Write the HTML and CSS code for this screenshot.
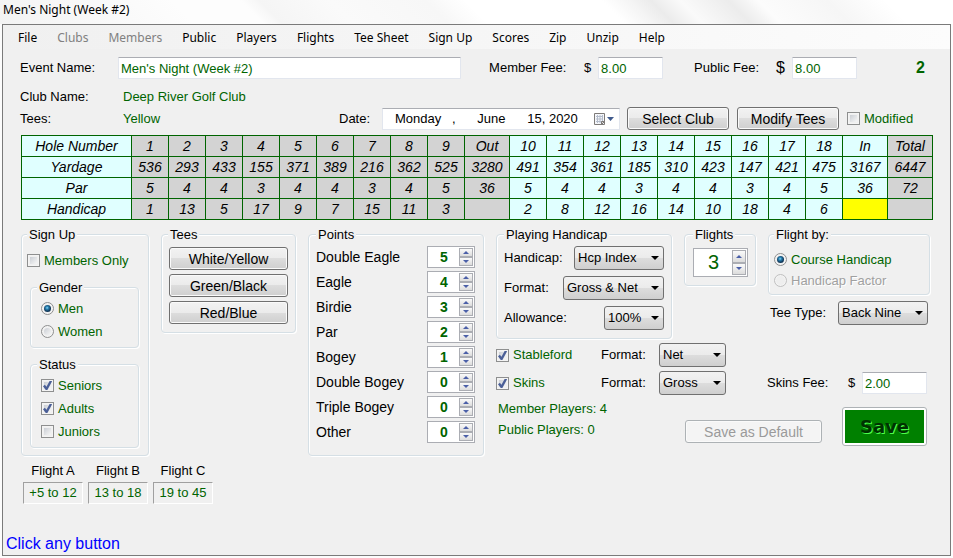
FILE: index.html
```html
<!DOCTYPE html>
<html lang="en">
  <head>
    <meta charset="UTF-8" />
    <meta name="viewport" content="width=device-width, initial-scale=1" />
    <title>Men's Night (Week #2)</title>
    <link rel="stylesheet" href="styles.css">
  </head>
  <body>
    <header class="titlebar">Men's Night (Week #2)</header>
    <main class="window">
      <nav class="menu">
        <button>File</button>
        <button disabled>Clubs</button>
        <button disabled>Members</button>
        <button>Public</button>
        <button>Players</button>
        <button>Flights</button>
        <button>Tee Sheet</button>
        <button>Sign Up</button>
        <button>Scores</button>
        <button>Zip</button>
        <button>Unzip</button>
        <button>Help</button>
      </nav>

      <form class="content" onsubmit="return false">
        <div class="row">
          <label class="name" for="event">Event Name:</label>
          <input class="text grow" id="event" type="text" value="Men's Night (Week #2)">
          <label class="fee-label" for="memberFee">Member Fee:</label>
          <span class="dollar">$</span>
          <input class="text fee" id="memberFee" type="text" value="8.00">
          <label class="fee-label public" for="publicFee">Public Fee:</label>
          <span class="dollar big">$</span>
          <input class="text fee" id="publicFee" type="text" value="8.00">
          <b class="week">2</b>
        </div>
        <div class="row club">
          <span class="name">Club Name:</span>
          <span class="value">Deep River Golf Club</span>
        </div>
        <div class="row tees-row">
          <span class="name">Tees:</span>
          <span class="value grow">Yellow</span>
          <label class="date-label" for="date">Date:</label>
          <span class="date">
            <input id="date" type="text" value="Monday   ,      June      15, 2020">
            <button type="button" aria-label="Open calendar">
              <svg width="22" height="14" viewBox="0 0 22 14">
                <path d="M1.500 1.500h10v11h-10z" fill="#f4f6fa" stroke="#7d7a78"/>
                <path d="M3 4.500h7M3 7h7M3 9.500h7M4.500 3v8M7 3v8M9.500 3v8" stroke="#b4bccb" fill="none"/>
                <path d="M11.500 9.500h-3v3z" fill="#ddd" stroke="#7d7a78"/>
                <path d="M14 5h7l-3.500 4z" fill="#3f5a8c"/>
              </svg>
            </button>
          </span>
          <button class="btn club-btn" type="button">Select Club</button>
          <button class="btn club-btn" type="button">Modify Tees</button>
          <label class="check modified"><input type="checkbox">Modified</label>
        </div>

        <table class="card">
          <colgroup>
            <col class="head">
            <col span="9" class="hole">
            <col class="sum">
            <col span="9" class="hole">
            <col span="2" class="sum">
          </colgroup>
          <tbody id="card"></tbody>
        </table>

        <div class="groups">
          <fieldset class="signup">
            <legend>Sign Up</legend>
            <label class="check"><input type="checkbox">Members Only</label>
            <fieldset class="gender">
              <legend>Gender</legend>
              <label class="check"><input type="radio" name="gender" checked>Men</label>
              <label class="check"><input type="radio" name="gender">Women</label>
            </fieldset>
            <fieldset class="status">
              <legend>Status</legend>
              <label class="check"><input type="checkbox" checked>Seniors</label>
              <label class="check"><input type="checkbox" checked>Adults</label>
              <label class="check"><input type="checkbox">Juniors</label>
            </fieldset>
          </fieldset>

          <fieldset class="tees">
            <legend>Tees</legend>
            <button class="btn" type="button">White/Yellow</button>
            <button class="btn" type="button">Green/Black</button>
            <button class="btn" type="button">Red/Blue</button>
          </fieldset>

          <fieldset class="points">
            <legend>Points</legend>
            <div id="points"></div>
          </fieldset>

          <div class="right">
            <div class="right-top">
              <fieldset class="playing">
                <legend>Playing Handicap</legend>
                <div class="line">
                  <label for="hcp">Handicap:</label>
                  <select id="hcp" class="w90"><option>Hcp Index</option></select>
                </div>
                <div class="line">
                  <label for="format">Format:</label>
                  <select id="format" class="w101"><option>Gross &amp; Net</option></select>
                </div>
                <div class="line">
                  <label for="allowance">Allowance:</label>
                  <select id="allowance" class="w60"><option>100%</option></select>
                </div>
              </fieldset>

              <fieldset class="flights">
                <legend>Flights</legend>
                <span class="spin large">
                  <input type="text" value="3" aria-label="Flights">
                  <span class="arrows">
                    <button type="button" class="up" aria-label="Up"></button>
                    <button type="button" class="down" aria-label="Down"></button>
                  </span>
                </span>
              </fieldset>

              <div class="flight-col">
                <fieldset class="flight-by">
                  <legend>Flight by:</legend>
                  <label class="check"><input type="radio" name="by" checked>Course Handicap</label>
                  <label class="check off"><input type="radio" name="by" disabled>Handicap Factor</label>
                </fieldset>
                <div class="line tee-type">
                  <label for="teeType">Tee Type:</label>
                  <select id="teeType" class="w90"><option>Back Nine</option></select>
                </div>
              </div>
            </div>

            <div class="game">
              <label class="check"><input type="checkbox" checked>Stableford</label>
              <label for="stableford">Format:</label>
              <select id="stableford"><option>Net</option></select>
            </div>
            <div class="game">
              <label class="check"><input type="checkbox" checked>Skins</label>
              <label for="skins">Format:</label>
              <select id="skins"><option>Gross</option></select>
              <label class="skins-label" for="skinsFee">Skins Fee:</label>
              <span class="dollar">$</span>
              <input class="text fee" id="skinsFee" type="text" value="2.00">
            </div>

            <div class="bottom">
              <div class="players">
                <div>Member Players: 4</div>
                <div>Public Players: 0</div>
              </div>
              <button class="btn default" type="button" disabled>Save as Default</button>
              <button class="save" type="submit"><span>Save</span></button>
            </div>
          </div>
        </div>

        <div class="ranges">
          <label>Flight A<output>+5 to 12</output></label>
          <label>Flight B<output>13 to 18</output></label>
          <label>Flight C<output>19 to 45</output></label>
        </div>
      </form>

      <footer class="hint">Click any button</footer>
    </main>

    <script>
      const card = [
        ['Hole Number', 1, 2, 3, 4, 5, 6, 7, 8, 9, 'Out', 10, 11, 12, 13, 14, 15, 16, 17, 18, 'In', 'Total'],
        ['Yardage', 536, 293, 433, 155, 371, 389, 216, 362, 525, 3280, 491, 354, 361, 185, 310, 423, 147, 421, 475, 3167, 6447],
        ['Par', 5, 4, 4, 3, 4, 4, 3, 4, 5, 36, 5, 4, 4, 3, 4, 4, 3, 4, 5, 36, 72],
        ['Handicap', 1, 13, 5, 17, 9, 7, 15, 11, 3, '', 2, 8, 12, 16, 14, 10, 18, 4, 6, '', ''],
      ];
      const points = {
        'Double Eagle': 5,
        'Eagle': 4,
        'Birdie': 3,
        'Par': 2,
        'Bogey': 1,
        'Double Bogey': 0,
        'Triple Bogey': 0,
        'Other': 0,
      };

      // front nine and the total are grey, the back nine is light blue
      const cellClass = (row, i) => {
        if (row === 3 && i === 20) return 'mark';
        return (i > 0 && i < 11) || i === 21 ? 'grey' : '';
      };
      document.getElementById('card').innerHTML = card.map((cells, row) =>
        '<tr>' + cells.map((text, i) => {
          const tag = row === 0 || i === 0 ? 'th' : 'td';
          return `<${tag} class="${cellClass(row, i)}">${text}</${tag}>`;
        }).join('') + '</tr>'
      ).join('');

      document.getElementById('points').innerHTML = Object.entries(points).map(([name, value], i) => `
        <div class="line">
          <label for="p${i}">${name}</label>
          <span class="spin">
            <input id="p${i}" type="text" value="${value}">
            <span class="arrows">
              <button type="button" class="up" aria-label="Up"></button>
              <button type="button" class="down" aria-label="Down"></button>
            </span>
          </span>
        </div>`).join('');

      document.querySelectorAll('.spin').forEach(spin => {
        const input = spin.querySelector('input');
        spin.querySelector('.up').onclick = () => input.value = +input.value + 1;
        spin.querySelector('.down').onclick = () => input.value = Math.max(0, input.value - 1);
      });
    </script>
  </body>
</html>
```

FILE: styles.css
```css
* {
  box-sizing: border-box;
}

body {
  margin: 0;
  min-height: 100vh;
  display: flex;
  flex-direction: column;
  padding: 0 2px 2px;
  font: 13px/16px "Liberation Sans", Arial, sans-serif;
  color: #000;
  background: #fcfcfc;
}

button, input, select {
  font: inherit;
  color: inherit;
  margin: 0;
}

/* Title bar */
.titlebar {
  height: 24px;
  margin: 0 -2px;
  padding: 0 3px;
  font: 12px/20px "Noto Sans", "Open Sans", sans-serif;
  background: linear-gradient(45deg, #f3f3f3 0, #fdfdfd 20%, #fdfdfd 27%, #f5f5f5 29%, #fafafa 36%, #f7f7f7 46%, #fff 50%, #fff 64%, #f4f4f4 67%, #ebebeb 69%, #fafafa 72%, #ececec 77%, #fcfcfc 80%, #f6f6f6 87%, #fff 93%);
}

.window {
  flex: 1;
  display: flex;
  flex-direction: column;
  border: 1px solid #7a7a7a;
  background: #f0f0f0;
}

/* Menu */
.menu {
  display: flex;
  gap: 20px;
  height: 24px;
  padding-left: 15px;
  background: linear-gradient(90deg, #f0f0f0, #fcfcfc);
}

.menu button {
  padding: 2px 0 0;
  border: 0;
  background: none;
  font: 12px/22px "Noto Sans", "Open Sans", sans-serif;
}

.menu button:disabled {
  color: #808080;
}

/* Top rows */
.content {
  flex: 1;
  padding: 8px 17px 0 16px;
}

.row {
  display: flex;
  align-items: center;
  height: 22px;
  padding-left: 1px;
}

.row.club {
  height: 18px;
  margin-top: 9px;
}

.row.tees-row {
  height: 25px;
}

.grow {
  flex: 1;
  min-width: 0;
}

.name {
  width: 98px;
}

.value {
  padding-left: 5px;
  color: #006400;
}

.text {
  height: 22px;
  padding: 1px 2px 0;
  border: 1px solid #e2e6ee;
  border-top-color: #abadb3;
  border-radius: 1px;
  background: #fff;
  color: #006400;
}

.fee {
  width: 65px;
}

.fee-label {
  width: 95px;
  margin-left: 28px;
}

.fee-label.public {
  width: 82px;
  margin-left: 31px;
}

.dollar {
  width: 14px;
}

.dollar.big {
  width: 16px;
  font-size: 16px;
}

.week {
  margin-left: 59px;
  margin-right: 8px;
  font-size: 16px;
  line-height: 20px;
  color: #006400;
}

.date-label {
  width: 43px;
}

.date {
  display: flex;
  align-items: center;
  width: 238px;
  height: 22px;
  margin-right: 7px;
  border: 1px solid #e2e6ee;
  border-top-color: #abadb3;
  background: #fff;
}

.date input {
  flex: 1;
  min-width: 0;
  padding: 0 0 0 12px;
  border: 0;
  background: none;
}

.date button {
  display: flex;
  padding: 0 4px;
  border: 0;
  background: none;
}

/* Buttons */
.btn {
  height: 23px;
  padding: 0;
  border: 1px solid #707070;
  border-radius: 3px;
  font-size: 14px;
  background: linear-gradient(#f2f2f2, #ebebeb 50%, #ddd 50%, #cfcfcf);
  box-shadow: inset 0 0 0 1px #fafafa;
}

.btn:disabled {
  border-color: #adb2b5;
  background: #f4f4f4;
  color: #9a9a9a;
}

.club-btn {
  width: 102px;
  margin-right: 8px;
}

.modified {
  width: 86px;
}

/* Tick boxes and radios */
.check {
  display: flex;
  align-items: center;
  gap: 4px;
  color: #006400;
}

.check input {
  appearance: none;
  flex: none;
  width: 13px;
  height: 13px;
  border: 1px solid #8e8f8f;
  background: linear-gradient(135deg, #cbcfd5, #f6f6f6) content-box;
  padding: 2px;
  box-shadow: inset 0 0 0 1px #f4f4f4;
}

.check input[type="checkbox"]:checked {
  background: url("data:image/svg+xml,%3Csvg xmlns='http://www.w3.org/2000/svg' viewBox='0 0 11 11'%3E%3Cpath d='M2.500 5.500l2.200 3L8.500 1.500' fill='none' stroke='%234b5f97' stroke-width='2'/%3E%3C/svg%3E") border-box, linear-gradient(135deg, #cbcfd5, #f6f6f6) content-box;
}

.check input[type="radio"] {
  border-radius: 50%;
}

.check input[type="radio"]:checked {
  background: radial-gradient(circle at 45% 40%, #8fd8f5 0, #2a84b5 25%, #123a5c 60%, #0b2a45) content-box;
}

.check.off {
  color: #a0a0a0;
  text-shadow: 1px 1px 0 #fff;
}

.check.off input {
  border-color: #c0c0c0;
  background: #eee;
}

/* Score card */
.card {
  width: calc(100% - 2px);
  margin: 4px 0 6px 2px;
  table-layout: fixed;
  border-collapse: collapse;
  font-size: 14px;
  font-style: italic;
  text-align: center;
}

.card .head { width: 110px; }
.card .hole { width: 37px; }
.card .sum { width: 45px; }

.card th, .card td {
  height: 21px;
  padding: 0;
  border: 1px solid #006400;
  font-weight: normal;
  background: #e0ffff;
}

.card .grey {
  background: #d3d3d3;
}

.card .mark {
  background: #ff0;
}

/* Group boxes */
.groups {
  display: flex;
  gap: 12px;
  padding-left: 2px;
}

fieldset {
  min-width: 0;
  margin: 0;
  padding: 0 8px;
  border: 1px solid #d5dfe5;
  border-radius: 4px;
  box-shadow: inset 1px 1px 0 #fff, 1px 1px 0 #fff;
}

legend {
  height: 16px;
  padding: 0 2px;
  line-height: 18px;
  background: #f0f0f0;
}

.line {
  display: flex;
  align-items: center;
  justify-content: space-between;
}

.signup {
  width: 128px;
  height: 230px;
  padding: 0 9px 0 5px;
}

.signup > .check {
  height: 37px;
}

.signup fieldset {
  margin-left: 3px;
  padding: 2px 10px 4px;
}

.signup fieldset .check {
  height: 23px;
}

.signup fieldset legend {
  margin-left: -4px;
}

.signup .status {
  margin-top: 8px;
}

.tees {
  width: 135px;
  height: 107px;
  padding: 5px 7px 0;
}

.tees .btn {
  display: block;
  width: 100%;
  margin-bottom: 4px;
}

.tees legend {
  margin-left: -1px;
}

.points {
  width: 176px;
  height: 230px;
  padding: 2px 8px 0 7px;
  font-size: 14px;
}

.points legend {
  font-size: 13px;
}

.points .line {
  height: 25px;
}

/* Spin boxes */
.spin {
  display: flex;
  width: 48px;
  height: 22px;
  padding: 1px;
  border: 1px solid #abadb3;
  background: #fff;
}

.spin input {
  flex: 1;
  width: 0;
  padding: 0;
  border: 0;
  background: none;
  font-weight: bold;
  text-align: center;
  color: #006400;
}

.arrows {
  display: flex;
  flex-direction: column;
  width: 14px;
}

.arrows button {
  flex: 1;
  display: flex;
  align-items: center;
  justify-content: center;
  padding: 0;
  border: 1px solid #abadb3;
  background: linear-gradient(#fafafa, #dcdcdc);
}

.arrows button::before {
  content: "";
  border: 3px solid transparent;
}

.arrows .up::before {
  border-top: 0;
  border-bottom-color: #4a5fa8;
}

.arrows .down::before {
  border-bottom: 0;
  border-top-color: #4a5fa8;
}

.spin.large {
  width: 55px;
  height: 29px;
}

.spin.large input {
  font-size: 20px;
  font-weight: normal;
}

/* Drop-downs */
select {
  appearance: none;
  width: 67px;
  height: 24px;
  padding: 0 3px;
  border: 1px solid #707070;
  border-radius: 3px;
  background: url("data:image/svg+xml,%3Csvg xmlns='http://www.w3.org/2000/svg' width='8' height='4'%3E%3Cpath d='M0 0h8L4 4z'/%3E%3C/svg%3E") right 4px center no-repeat, linear-gradient(#f2f2f2, #ebebeb 50%, #ddd 50%, #cfcfcf);
}

.w60 { width: 60px; }
.w90 { width: 90px; }
.w101 { width: 101px; }

.right {
  flex: 1;
}

.right-top {
  display: flex;
  align-items: flex-start;
  gap: 12px;
}

.playing {
  width: 176px;
  height: 113px;
  padding: 1px 7px 0;
}

.playing .line {
  height: 30px;
}

.flights {
  width: 72px;
  height: 60px;
  padding: 6px 8px 0;
}

.flight-by {
  width: 162px;
  height: 69px;
  padding: 7px 5px 0;
}

.flight-by .check {
  height: 21px;
}

.tee-type {
  width: 160px;
  padding: 6px 0 0 2px;
}

/* Games */
.game {
  display: flex;
  align-items: center;
  height: 24px;
  margin-top: 4px;
}

.game .check {
  width: 105px;
}

.game .check + label {
  width: 58px;
}

.game .skins-label {
  width: 81px;
  margin-left: 41px;
}

.bottom {
  display: flex;
  align-items: flex-end;
  margin-top: 3px;
}

.players {
  width: 189px;
  padding-left: 2px;
  line-height: 21px;
  align-self: flex-start;
  color: #006400;
}

.default {
  width: 137px;
  margin: 0 20px 3px 0;
}

.save {
  display: flex;
  width: 85px;
  height: 39px;
  margin-top: 9px;
  padding: 2px;
  border: 1px solid #adb2b5;
  border-radius: 3px;
  background: #fff;
}

.save span {
  flex: 1;
  font: bold 18px/34px "DejaVu Sans", Verdana, sans-serif;
  color: #003200;
  background: #008000;
  text-shadow: 1px 1px 0 #4cff4c;
}

/* Flight ranges */
.ranges {
  display: flex;
  gap: 5px;
  padding: 7px 0 0 4px;
}

.ranges label {
  width: 60px;
  text-align: center;
}

.ranges output {
  display: block;
  height: 22px;
  margin-top: 3px;
  line-height: 20px;
  border: 1px solid #fff;
  border-top-color: #a0a0a0;
  border-left-color: #a0a0a0;
  color: #006400;
}

.hint {
  padding: 0 3px 2px;
  font-size: 16px;
  line-height: 18px;
  color: #00f;
}
```
